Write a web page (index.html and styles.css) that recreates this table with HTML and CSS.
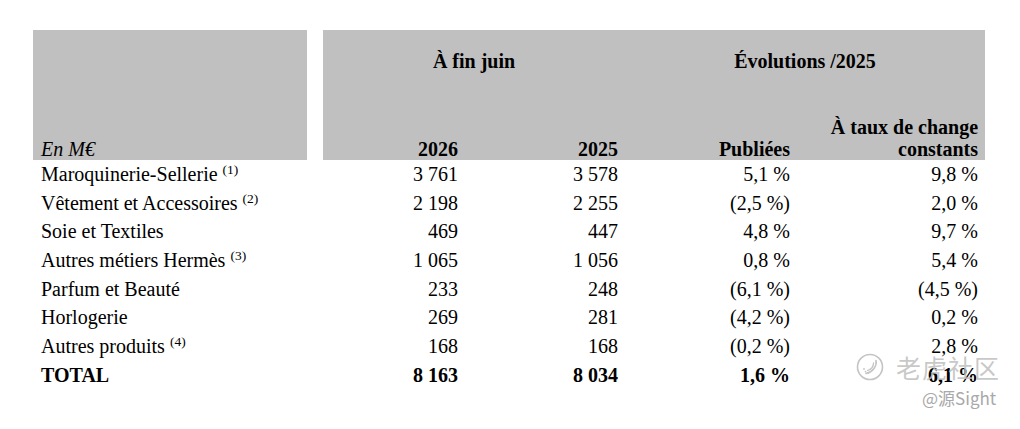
FILE: index.html
```html
<!DOCTYPE html>
<html lang="fr">
<head>
<meta charset="utf-8">
<title>Chiffre d'affaires par métier</title>
<link rel="stylesheet" href="styles.css">
</head>
<body>
<div class="page">
  <table class="fin">
    <colgroup>
      <col class="c-label"><col class="c-gap"><col class="c-a"><col class="c-b"><col class="c-c"><col class="c-d">
    </colgroup>
    <thead>
      <tr class="h1">
        <th class="hd lab" rowspan="2"><em>En M€</em></th>
        <th class="gap" rowspan="2"></th>
        <th class="hd grp" colspan="2">À fin juin</th>
        <th class="hd grp" colspan="2">Évolutions /2025</th>
      </tr>
      <tr class="h2">
        <th class="hd num">2026</th>
        <th class="hd num">2025</th>
        <th class="hd num">Publiées</th>
        <th class="hd num">À taux de change<br>constants</th>
      </tr>
    </thead>
    <tbody>
      <tr><td class="lab">Maroquinerie-Sellerie <sup>(1)</sup></td><td></td><td class="num">3 761</td><td class="num">3 578</td><td class="num">5,1 %</td><td class="num">9,8 %</td></tr>
      <tr><td class="lab">Vêtement et Accessoires <sup>(2)</sup></td><td></td><td class="num">2 198</td><td class="num">2 255</td><td class="num">(2,5 %)</td><td class="num">2,0 %</td></tr>
      <tr><td class="lab">Soie et Textiles</td><td></td><td class="num">469</td><td class="num">447</td><td class="num">4,8 %</td><td class="num">9,7 %</td></tr>
      <tr><td class="lab">Autres métiers Hermès <sup>(3)</sup></td><td></td><td class="num">1 065</td><td class="num">1 056</td><td class="num">0,8 %</td><td class="num">5,4 %</td></tr>
      <tr><td class="lab">Parfum et Beauté</td><td></td><td class="num">233</td><td class="num">248</td><td class="num">(6,1 %)</td><td class="num">(4,5 %)</td></tr>
      <tr><td class="lab">Horlogerie</td><td></td><td class="num">269</td><td class="num">281</td><td class="num">(4,2 %)</td><td class="num">0,2 %</td></tr>
      <tr><td class="lab">Autres produits <sup>(4)</sup></td><td></td><td class="num">168</td><td class="num">168</td><td class="num">(0,2 %)</td><td class="num">2,8 %</td></tr>
      <tr class="total"><td class="lab">TOTAL</td><td></td><td class="num">8 163</td><td class="num">8 034</td><td class="num">1,6 %</td><td class="num">6,1 %</td></tr>
    </tbody>
  </table>

  <div class="watermark">
    <div class="wm-line">
      <svg class="wm-logo" viewBox="0 0 30 30" width="30" height="30" aria-hidden="true">
        <circle cx="15" cy="15" r="12.5" fill="none" stroke="#c4c4c4" stroke-width="1.6"/>
        <path d="M21 8.5 C22 14 18 20 11 21.5" fill="none" stroke="#c4c4c4" stroke-width="1.6" stroke-linecap="round"/>
        <path d="M18.5 11 C18.5 14.5 16 17.5 12.5 18.5" fill="none" stroke="#c4c4c4" stroke-width="1.3" stroke-linecap="round"/>
        <circle cx="9" cy="17" r="0.9" fill="#c4c4c4"/>
        <circle cx="10.5" cy="19.6" r="0.9" fill="#c4c4c4"/>
        <circle cx="13.5" cy="21" r="0.9" fill="#c4c4c4"/>
      </svg>
      <span class="wm-name">老虎社区</span>
    </div>
    <div class="wm-user">@源Sight</div>
  </div>
</div>
</body>
</html>
```

FILE: styles.css
```css
html, body {
  margin: 0;
  padding: 0;
  background: #ffffff;
}

.page {
  position: relative;
  width: 1020px;
  height: 429px;
  padding: 30px 0 0 33px;
  box-sizing: border-box;
  font-family: "Liberation Serif", "Times New Roman", serif;
  color: #000;
}

.fin {
  table-layout: fixed;
  width: 952px;
  border-collapse: collapse;
  border-spacing: 0;
  font-size: 20px;
  line-height: 22px;
}

.c-label { width: 274px; }
.c-gap { width: 16px; }
.c-a { width: 142px; }
.c-b { width: 160px; }
.c-c { width: 172px; }
.c-d { width: 188px; }

.fin th, .fin td {
  padding: 0;
  font-weight: normal;
}

.hd {
  background: #c0c0c0;
  font-weight: bold;
}

.fin th.hd { font-weight: bold; }

.gap { background: transparent; }

.h1 { height: 64px; }
.h1 .grp {
  text-align: center;
  vertical-align: top;
  padding-top: 20px;
}

.h2 { height: 66px; }
.h2 .num { vertical-align: bottom; }

.fin th.lab {
  text-align: left;
  vertical-align: bottom;
  padding-left: 8px;
  font-weight: normal;
}

.fin th.lab em {
  font-style: italic;
}

.num {
  text-align: right;
  padding-right: 7px !important;
}

.fin tbody tr { height: 28.7px; }
.fin tbody td {
  vertical-align: middle;
  padding-bottom: 1px;
  white-space: nowrap;
}

.fin tbody td.lab { padding-left: 8px; }

.fin sup {
  font-size: 13.5px;
  line-height: 0;
  vertical-align: 7px;
}

.total td { font-weight: bold; }

.watermark {
  position: absolute;
  left: 855px;
  top: 352px;
  font-family: "Noto Sans CJK SC", "Noto Sans", sans-serif;
}

.wm-line {
  display: flex;
  align-items: center;
  gap: 11px;
}

.wm-logo { display: block; }

.wm-name {
  font-size: 25px;
  line-height: 30px;
  letter-spacing: 1px;
  color: rgba(190, 190, 190, 0.85);
}

.wm-user {
  margin: 6px 0 0 67px;
  font-size: 17px;
  line-height: 20px;
  color: #a9a9a9;
}
```
